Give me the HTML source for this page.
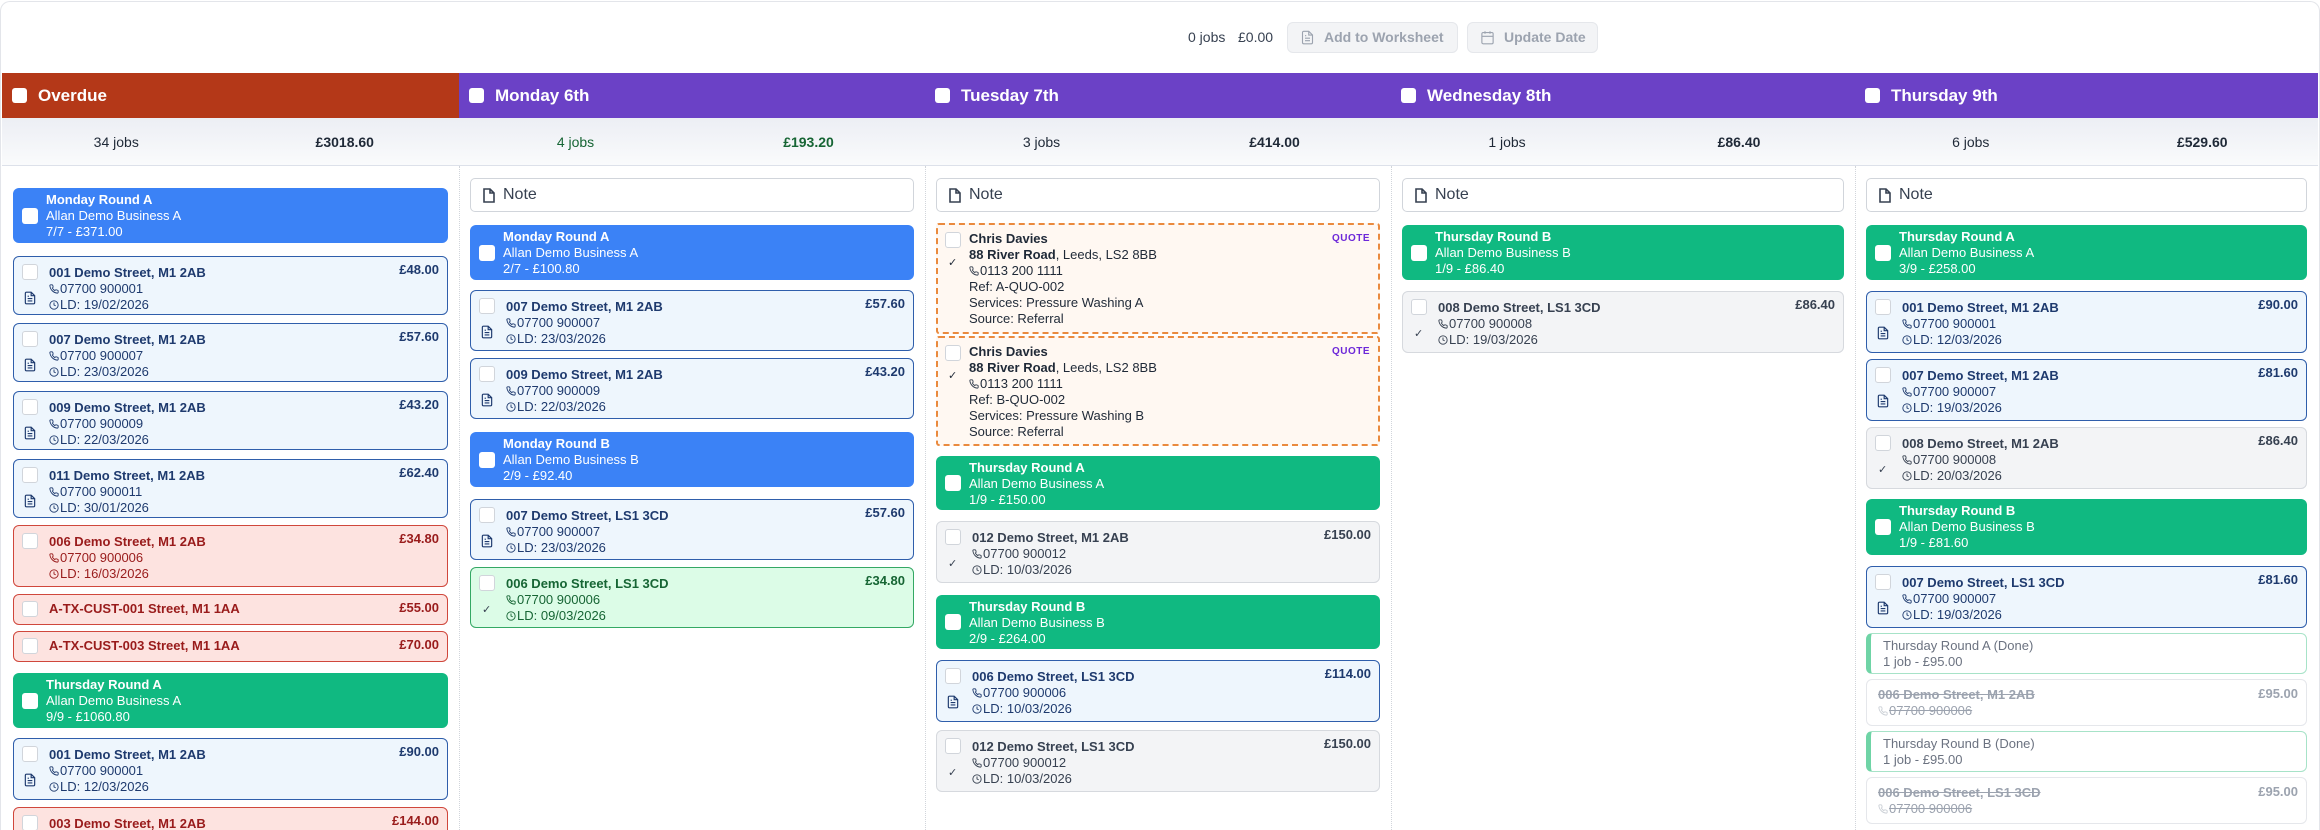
<!DOCTYPE html>
<html style="width:2320px;height:830px;overflow:hidden"><head><meta charset="utf-8"><style>
*{box-sizing:border-box;margin:0;padding:0}
body{width:2320px;height:830px;overflow:hidden;background:#fff;font-family:"Liberation Sans",Arial,sans-serif;position:relative;color:#1f2937}
.frame{position:absolute;left:0;top:1px;width:2320px;height:829px;border:1.5px solid #e3e5ea;border-bottom:none;border-radius:10px 10px 0 0}
.top{position:absolute;top:22px;height:31px;font-size:14px;line-height:31px;color:#374151}
.btn{position:absolute;top:22px;height:31px;background:#f3f4f6;border:1px solid #e5e7eb;border-radius:6px;color:#9ca3af;font-size:14px;font-weight:bold;line-height:29px;padding-left:36px}
.btn svg{position:absolute;left:12px;top:7px;width:15px;height:15px;fill:none;stroke:#9ca3af;stroke-width:1.8}
.col{position:absolute;top:0;height:830px;overflow:hidden}
.hd{position:absolute;top:73px;left:0;right:0;height:45px;color:#fff;font-weight:bold;font-size:17px;line-height:45px;padding-left:36px}
.hd i{position:absolute;left:10px;top:15px;width:15px;height:15px;background:#fff;border-radius:3px}
.sm{position:absolute;top:118px;left:0;right:0;height:48px;background:linear-gradient(#eceef4,#fafbfc);border-bottom:1.5px solid #dde1ea;font-size:14px;line-height:48px;color:#1f2937}
.sm span{position:absolute;width:50%;text-align:center}
.sm .a{left:0}.sm .b{left:50%;font-weight:bold}
.sep{position:absolute;top:166px;bottom:0;left:0;border-left:1px dotted #d1d5db}
.c{position:absolute;left:11px;right:11px;border-radius:6px;font-size:13px;line-height:16px}
.rd{color:#fff;padding:4px 0 0 33px}
.rd b{font-weight:bold}
.rd i{position:absolute;left:9px;top:50%;margin-top:-8px;width:16px;height:16px;background:#fff;border-radius:3px}
.bl{background:#3b82f6}.gr{background:#10b981}
.jb{padding:8px 0 0 35px;border:1.5px solid}
.jb .cb{position:absolute;left:8px;top:7px;width:16px;height:16px;background:#fff;border:1px solid #d1d5db;border-radius:3px}
.jb .p{position:absolute;right:8px;top:5px;font-weight:bold}
.jb b{font-weight:bold}
.jb .doc{position:absolute;left:9px;top:33px;width:14px;height:16px;fill:none;stroke-width:2}
.jb .ck{position:absolute;left:11px;top:34px;font-size:11px;color:#374151}
.ic{width:10px;height:10px;fill:none;stroke-width:2.2;vertical-align:-1px;margin-right:1px}
.blu{background:#eef6fd;border-color:#2f5eab;color:#1e3a6e}.blu svg{stroke:#1e3a6e}
.gry{background:#f3f4f6;border-color:#d6d9de;color:#374151}.gry svg{stroke:#374151}
.red{background:#fde3e0;border-color:#d0473c;color:#991b1b}.red svg{stroke:#991b1b}
.grn{background:#dcfce7;border-color:#34a864;color:#166534}.grn svg{stroke:#166534}
.note{position:absolute;left:11px;right:11px;top:178px;height:34px;border:1px solid #d1d5db;border-radius:5px;background:#fff;font-size:16px;line-height:32px;padding-left:32px;color:#374151}
.note svg{position:absolute;left:12px;top:9px;width:12px;height:15px;fill:none;stroke:#374151;stroke-width:1.6}
.q{background:#fff8f2;border:2px dashed #ea8a3e;border-radius:3px;padding:6px 0 0 31px;color:#1f2937}
.q .cb{position:absolute;left:7px;top:7px;width:16px;height:16px;background:#fff;border:1px solid #d1d5db;border-radius:3px}
.q .ck{position:absolute;left:10px;top:30px;font-size:11px}
.q .qt{position:absolute;right:8px;top:6px;font-size:10px;font-weight:bold;color:#6d28d9;letter-spacing:.5px}
.q svg{stroke:#374151}
.dn{background:#fff;border:1.5px solid #a7e3c8;border-left:5px solid #6fd4a6;color:#6b7280;padding:4px 0 0 12px;font-size:13px}
.st{background:#fff;border:1px solid #e5e7eb;color:#9ca3af;padding:7px 0 0 11px;text-decoration:line-through}
.st .p{position:absolute;right:8px;top:6px;font-weight:bold}
.st svg{stroke:#cbd0d6}
</style></head><body>
<div class="frame"></div>
<div class="top" style="left:1188px">0 jobs</div>
<div class="top" style="left:1238px">£0.00</div>
<div class="btn" style="left:1287px;width:171px"><svg viewBox="0 0 24 24"><path d="M14 2H6a2 2 0 0 0-2 2v16a2 2 0 0 0 2 2h12a2 2 0 0 0 2-2V8z"/><path d="M14 2v6h6M8 13h8M8 17h8M8 9h2"/></svg>Add to Worksheet</div>
<div class="btn" style="left:1467px;width:131px"><svg viewBox="0 0 24 24"><rect x="3" y="4" width="18" height="18" rx="2"/><path d="M16 2v4M8 2v4M3 10h18"/></svg>Update Date</div>

<!-- Overdue -->
<div class="col" style="left:2px;width:457px">
<div class="hd" style="background:#b43818"><i></i>Overdue</div>
<div class="sm"><span class="a">34 jobs</span><span class="b">£3018.60</span></div>
<div class="c rd bl" style="top:188px;height:55px"><i></i><b>Monday Round A</b><br>Allan Demo Business A<br>7/7 - £371.00</div>
<div class="c jb blu" style="top:256px;height:59px"><i class="cb"></i><svg class="doc" viewBox="0 0 24 24"><path d="M14 2H6a2 2 0 0 0-2 2v16a2 2 0 0 0 2 2h12a2 2 0 0 0 2-2V8z M14 2v6h6M8 13h8M8 17h8M8 9h2"/></svg><b>001 Demo Street, M1 2AB</b><br><svg class="ic" viewBox="0 0 24 24"><path d="M22 16.9v3a2 2 0 0 1-2.2 2A19.8 19.8 0 0 1 2.1 4.2 2 2 0 0 1 4.1 2h3a2 2 0 0 1 2 1.7l.7 2.7a2 2 0 0 1-.5 2.1L8 9.8a16 16 0 0 0 6 6l1.3-1.3a2 2 0 0 1 2.1-.4l2.7.7a2 2 0 0 1 1.9 2.1z"/></svg>07700 900001<br><svg class="ic" viewBox="0 0 24 24"><circle cx="12" cy="12" r="10"/><path d="M12 6v6l4 2"/></svg>LD: 19/02/2026<span class="p">£48.00</span></div>
<div class="c jb blu" style="top:323px;height:59px"><i class="cb"></i><svg class="doc" viewBox="0 0 24 24"><path d="M14 2H6a2 2 0 0 0-2 2v16a2 2 0 0 0 2 2h12a2 2 0 0 0 2-2V8z M14 2v6h6M8 13h8M8 17h8M8 9h2"/></svg><b>007 Demo Street, M1 2AB</b><br><svg class="ic" viewBox="0 0 24 24"><path d="M22 16.9v3a2 2 0 0 1-2.2 2A19.8 19.8 0 0 1 2.1 4.2 2 2 0 0 1 4.1 2h3a2 2 0 0 1 2 1.7l.7 2.7a2 2 0 0 1-.5 2.1L8 9.8a16 16 0 0 0 6 6l1.3-1.3a2 2 0 0 1 2.1-.4l2.7.7a2 2 0 0 1 1.9 2.1z"/></svg>07700 900007<br><svg class="ic" viewBox="0 0 24 24"><circle cx="12" cy="12" r="10"/><path d="M12 6v6l4 2"/></svg>LD: 23/03/2026<span class="p">£57.60</span></div>
<div class="c jb blu" style="top:391px;height:59px"><i class="cb"></i><svg class="doc" viewBox="0 0 24 24"><path d="M14 2H6a2 2 0 0 0-2 2v16a2 2 0 0 0 2 2h12a2 2 0 0 0 2-2V8z M14 2v6h6M8 13h8M8 17h8M8 9h2"/></svg><b>009 Demo Street, M1 2AB</b><br><svg class="ic" viewBox="0 0 24 24"><path d="M22 16.9v3a2 2 0 0 1-2.2 2A19.8 19.8 0 0 1 2.1 4.2 2 2 0 0 1 4.1 2h3a2 2 0 0 1 2 1.7l.7 2.7a2 2 0 0 1-.5 2.1L8 9.8a16 16 0 0 0 6 6l1.3-1.3a2 2 0 0 1 2.1-.4l2.7.7a2 2 0 0 1 1.9 2.1z"/></svg>07700 900009<br><svg class="ic" viewBox="0 0 24 24"><circle cx="12" cy="12" r="10"/><path d="M12 6v6l4 2"/></svg>LD: 22/03/2026<span class="p">£43.20</span></div>
<div class="c jb blu" style="top:459px;height:59px"><i class="cb"></i><svg class="doc" viewBox="0 0 24 24"><path d="M14 2H6a2 2 0 0 0-2 2v16a2 2 0 0 0 2 2h12a2 2 0 0 0 2-2V8z M14 2v6h6M8 13h8M8 17h8M8 9h2"/></svg><b>011 Demo Street, M1 2AB</b><br><svg class="ic" viewBox="0 0 24 24"><path d="M22 16.9v3a2 2 0 0 1-2.2 2A19.8 19.8 0 0 1 2.1 4.2 2 2 0 0 1 4.1 2h3a2 2 0 0 1 2 1.7l.7 2.7a2 2 0 0 1-.5 2.1L8 9.8a16 16 0 0 0 6 6l1.3-1.3a2 2 0 0 1 2.1-.4l2.7.7a2 2 0 0 1 1.9 2.1z"/></svg>07700 900011<br><svg class="ic" viewBox="0 0 24 24"><circle cx="12" cy="12" r="10"/><path d="M12 6v6l4 2"/></svg>LD: 30/01/2026<span class="p">£62.40</span></div>
<div class="c jb red" style="top:525px;height:62px"><i class="cb"></i><b>006 Demo Street, M1 2AB</b><br><svg class="ic" viewBox="0 0 24 24"><path d="M22 16.9v3a2 2 0 0 1-2.2 2A19.8 19.8 0 0 1 2.1 4.2 2 2 0 0 1 4.1 2h3a2 2 0 0 1 2 1.7l.7 2.7a2 2 0 0 1-.5 2.1L8 9.8a16 16 0 0 0 6 6l1.3-1.3a2 2 0 0 1 2.1-.4l2.7.7a2 2 0 0 1 1.9 2.1z"/></svg>07700 900006<br><svg class="ic" viewBox="0 0 24 24"><circle cx="12" cy="12" r="10"/><path d="M12 6v6l4 2"/></svg>LD: 16/03/2026<span class="p">£34.80</span></div>
<div class="c jb red" style="top:594px;height:31px;padding-top:6px"><i class="cb" style="top:6px"></i><b>A-TX-CUST-001 Street, M1 1AA</b><span class="p">£55.00</span></div>
<div class="c jb red" style="top:631px;height:31px;padding-top:6px"><i class="cb" style="top:6px"></i><b>A-TX-CUST-003 Street, M1 1AA</b><span class="p">£70.00</span></div>
<div class="c rd gr" style="top:673px;height:55px"><i></i><b>Thursday Round A</b><br>Allan Demo Business A<br>9/9 - £1060.80</div>
<div class="c jb blu" style="top:738px;height:62px"><i class="cb"></i><svg class="doc" viewBox="0 0 24 24"><path d="M14 2H6a2 2 0 0 0-2 2v16a2 2 0 0 0 2 2h12a2 2 0 0 0 2-2V8z M14 2v6h6M8 13h8M8 17h8M8 9h2"/></svg><b>001 Demo Street, M1 2AB</b><br><svg class="ic" viewBox="0 0 24 24"><path d="M22 16.9v3a2 2 0 0 1-2.2 2A19.8 19.8 0 0 1 2.1 4.2 2 2 0 0 1 4.1 2h3a2 2 0 0 1 2 1.7l.7 2.7a2 2 0 0 1-.5 2.1L8 9.8a16 16 0 0 0 6 6l1.3-1.3a2 2 0 0 1 2.1-.4l2.7.7a2 2 0 0 1 1.9 2.1z"/></svg>07700 900001<br><svg class="ic" viewBox="0 0 24 24"><circle cx="12" cy="12" r="10"/><path d="M12 6v6l4 2"/></svg>LD: 12/03/2026<span class="p">£90.00</span></div>
<div class="c jb red" style="top:807px;height:40px"><i class="cb"></i><b>003 Demo Street, M1 2AB</b><span class="p">£144.00</span></div>
</div>

<!-- Monday -->
<div class="col" style="left:459px;width:466px">
<div class="hd" style="background:#6b41c6"><i></i>Monday 6th</div>
<div class="sm" style="color:#166534"><span class="a">4 jobs</span><span class="b">£193.20</span></div>
<div class="sep"></div>
<div class="note"><svg viewBox="0 0 12 15"><path d="M1 1h6l4 4v9H1z M7 1v4h4"/></svg>Note</div>
<div class="c rd bl" style="top:225px;height:55px"><i></i><b>Monday Round A</b><br>Allan Demo Business A<br>2/7 - £100.80</div>
<div class="c jb blu" style="top:290px;height:61px"><i class="cb"></i><svg class="doc" viewBox="0 0 24 24"><path d="M14 2H6a2 2 0 0 0-2 2v16a2 2 0 0 0 2 2h12a2 2 0 0 0 2-2V8z M14 2v6h6M8 13h8M8 17h8M8 9h2"/></svg><b>007 Demo Street, M1 2AB</b><br><svg class="ic" viewBox="0 0 24 24"><path d="M22 16.9v3a2 2 0 0 1-2.2 2A19.8 19.8 0 0 1 2.1 4.2 2 2 0 0 1 4.1 2h3a2 2 0 0 1 2 1.7l.7 2.7a2 2 0 0 1-.5 2.1L8 9.8a16 16 0 0 0 6 6l1.3-1.3a2 2 0 0 1 2.1-.4l2.7.7a2 2 0 0 1 1.9 2.1z"/></svg>07700 900007<br><svg class="ic" viewBox="0 0 24 24"><circle cx="12" cy="12" r="10"/><path d="M12 6v6l4 2"/></svg>LD: 23/03/2026<span class="p">£57.60</span></div>
<div class="c jb blu" style="top:358px;height:61px"><i class="cb"></i><svg class="doc" viewBox="0 0 24 24"><path d="M14 2H6a2 2 0 0 0-2 2v16a2 2 0 0 0 2 2h12a2 2 0 0 0 2-2V8z M14 2v6h6M8 13h8M8 17h8M8 9h2"/></svg><b>009 Demo Street, M1 2AB</b><br><svg class="ic" viewBox="0 0 24 24"><path d="M22 16.9v3a2 2 0 0 1-2.2 2A19.8 19.8 0 0 1 2.1 4.2 2 2 0 0 1 4.1 2h3a2 2 0 0 1 2 1.7l.7 2.7a2 2 0 0 1-.5 2.1L8 9.8a16 16 0 0 0 6 6l1.3-1.3a2 2 0 0 1 2.1-.4l2.7.7a2 2 0 0 1 1.9 2.1z"/></svg>07700 900009<br><svg class="ic" viewBox="0 0 24 24"><circle cx="12" cy="12" r="10"/><path d="M12 6v6l4 2"/></svg>LD: 22/03/2026<span class="p">£43.20</span></div>
<div class="c rd bl" style="top:432px;height:55px"><i></i><b>Monday Round B</b><br>Allan Demo Business B<br>2/9 - £92.40</div>
<div class="c jb blu" style="top:499px;height:61px"><i class="cb"></i><svg class="doc" viewBox="0 0 24 24"><path d="M14 2H6a2 2 0 0 0-2 2v16a2 2 0 0 0 2 2h12a2 2 0 0 0 2-2V8z M14 2v6h6M8 13h8M8 17h8M8 9h2"/></svg><b>007 Demo Street, LS1 3CD</b><br><svg class="ic" viewBox="0 0 24 24"><path d="M22 16.9v3a2 2 0 0 1-2.2 2A19.8 19.8 0 0 1 2.1 4.2 2 2 0 0 1 4.1 2h3a2 2 0 0 1 2 1.7l.7 2.7a2 2 0 0 1-.5 2.1L8 9.8a16 16 0 0 0 6 6l1.3-1.3a2 2 0 0 1 2.1-.4l2.7.7a2 2 0 0 1 1.9 2.1z"/></svg>07700 900007<br><svg class="ic" viewBox="0 0 24 24"><circle cx="12" cy="12" r="10"/><path d="M12 6v6l4 2"/></svg>LD: 23/03/2026<span class="p">£57.60</span></div>
<div class="c jb grn" style="top:567px;height:61px"><i class="cb"></i><span class="ck">✓</span><b>006 Demo Street, LS1 3CD</b><br><svg class="ic" viewBox="0 0 24 24"><path d="M22 16.9v3a2 2 0 0 1-2.2 2A19.8 19.8 0 0 1 2.1 4.2 2 2 0 0 1 4.1 2h3a2 2 0 0 1 2 1.7l.7 2.7a2 2 0 0 1-.5 2.1L8 9.8a16 16 0 0 0 6 6l1.3-1.3a2 2 0 0 1 2.1-.4l2.7.7a2 2 0 0 1 1.9 2.1z"/></svg>07700 900006<br><svg class="ic" viewBox="0 0 24 24"><circle cx="12" cy="12" r="10"/><path d="M12 6v6l4 2"/></svg>LD: 09/03/2026<span class="p">£34.80</span></div>
</div>

<!-- Tuesday -->
<div class="col" style="left:925px;width:466px">
<div class="hd" style="background:#6b41c6"><i></i>Tuesday 7th</div>
<div class="sm"><span class="a">3 jobs</span><span class="b">£414.00</span></div>
<div class="sep"></div>
<div class="note"><svg viewBox="0 0 12 15"><path d="M1 1h6l4 4v9H1z M7 1v4h4"/></svg>Note</div>
<div class="c q" style="top:223px;height:111px"><i class="cb"></i><span class="ck">✓</span><span class="qt">QUOTE</span><b>Chris Davies</b><br><b>88 River Road</b>, Leeds, LS2 8BB<br><svg class="ic" viewBox="0 0 24 24"><path d="M22 16.9v3a2 2 0 0 1-2.2 2A19.8 19.8 0 0 1 2.1 4.2 2 2 0 0 1 4.1 2h3a2 2 0 0 1 2 1.7l.7 2.7a2 2 0 0 1-.5 2.1L8 9.8a16 16 0 0 0 6 6l1.3-1.3a2 2 0 0 1 2.1-.4l2.7.7a2 2 0 0 1 1.9 2.1z"/></svg>0113 200 1111<br>Ref: A-QUO-002<br>Services: Pressure Washing A<br>Source: Referral</div>
<div class="c q" style="top:336px;height:110px"><i class="cb"></i><span class="ck">✓</span><span class="qt">QUOTE</span><b>Chris Davies</b><br><b>88 River Road</b>, Leeds, LS2 8BB<br><svg class="ic" viewBox="0 0 24 24"><path d="M22 16.9v3a2 2 0 0 1-2.2 2A19.8 19.8 0 0 1 2.1 4.2 2 2 0 0 1 4.1 2h3a2 2 0 0 1 2 1.7l.7 2.7a2 2 0 0 1-.5 2.1L8 9.8a16 16 0 0 0 6 6l1.3-1.3a2 2 0 0 1 2.1-.4l2.7.7a2 2 0 0 1 1.9 2.1z"/></svg>0113 200 1111<br>Ref: B-QUO-002<br>Services: Pressure Washing B<br>Source: Referral</div>
<div class="c rd gr" style="top:456px;height:54px"><i></i><b>Thursday Round A</b><br>Allan Demo Business A<br>1/9 - £150.00</div>
<div class="c jb gry" style="top:521px;height:62px"><i class="cb"></i><span class="ck">✓</span><b>012 Demo Street, M1 2AB</b><br><svg class="ic" viewBox="0 0 24 24"><path d="M22 16.9v3a2 2 0 0 1-2.2 2A19.8 19.8 0 0 1 2.1 4.2 2 2 0 0 1 4.1 2h3a2 2 0 0 1 2 1.7l.7 2.7a2 2 0 0 1-.5 2.1L8 9.8a16 16 0 0 0 6 6l1.3-1.3a2 2 0 0 1 2.1-.4l2.7.7a2 2 0 0 1 1.9 2.1z"/></svg>07700 900012<br><svg class="ic" viewBox="0 0 24 24"><circle cx="12" cy="12" r="10"/><path d="M12 6v6l4 2"/></svg>LD: 10/03/2026<span class="p">£150.00</span></div>
<div class="c rd gr" style="top:595px;height:54px"><i></i><b>Thursday Round B</b><br>Allan Demo Business B<br>2/9 - £264.00</div>
<div class="c jb blu" style="top:660px;height:62px"><i class="cb"></i><svg class="doc" viewBox="0 0 24 24"><path d="M14 2H6a2 2 0 0 0-2 2v16a2 2 0 0 0 2 2h12a2 2 0 0 0 2-2V8z M14 2v6h6M8 13h8M8 17h8M8 9h2"/></svg><b>006 Demo Street, LS1 3CD</b><br><svg class="ic" viewBox="0 0 24 24"><path d="M22 16.9v3a2 2 0 0 1-2.2 2A19.8 19.8 0 0 1 2.1 4.2 2 2 0 0 1 4.1 2h3a2 2 0 0 1 2 1.7l.7 2.7a2 2 0 0 1-.5 2.1L8 9.8a16 16 0 0 0 6 6l1.3-1.3a2 2 0 0 1 2.1-.4l2.7.7a2 2 0 0 1 1.9 2.1z"/></svg>07700 900006<br><svg class="ic" viewBox="0 0 24 24"><circle cx="12" cy="12" r="10"/><path d="M12 6v6l4 2"/></svg>LD: 10/03/2026<span class="p">£114.00</span></div>
<div class="c jb gry" style="top:730px;height:62px"><i class="cb"></i><span class="ck">✓</span><b>012 Demo Street, LS1 3CD</b><br><svg class="ic" viewBox="0 0 24 24"><path d="M22 16.9v3a2 2 0 0 1-2.2 2A19.8 19.8 0 0 1 2.1 4.2 2 2 0 0 1 4.1 2h3a2 2 0 0 1 2 1.7l.7 2.7a2 2 0 0 1-.5 2.1L8 9.8a16 16 0 0 0 6 6l1.3-1.3a2 2 0 0 1 2.1-.4l2.7.7a2 2 0 0 1 1.9 2.1z"/></svg>07700 900012<br><svg class="ic" viewBox="0 0 24 24"><circle cx="12" cy="12" r="10"/><path d="M12 6v6l4 2"/></svg>LD: 10/03/2026<span class="p">£150.00</span></div>
</div>

<!-- Wednesday -->
<div class="col" style="left:1391px;width:464px">
<div class="hd" style="background:#6b41c6"><i></i>Wednesday 8th</div>
<div class="sm"><span class="a">1 jobs</span><span class="b">£86.40</span></div>
<div class="sep"></div>
<div class="note"><svg viewBox="0 0 12 15"><path d="M1 1h6l4 4v9H1z M7 1v4h4"/></svg>Note</div>
<div class="c rd gr" style="top:225px;height:55px"><i></i><b>Thursday Round B</b><br>Allan Demo Business B<br>1/9 - £86.40</div>
<div class="c jb gry" style="top:291px;height:62px"><i class="cb"></i><span class="ck">✓</span><b>008 Demo Street, LS1 3CD</b><br><svg class="ic" viewBox="0 0 24 24"><path d="M22 16.9v3a2 2 0 0 1-2.2 2A19.8 19.8 0 0 1 2.1 4.2 2 2 0 0 1 4.1 2h3a2 2 0 0 1 2 1.7l.7 2.7a2 2 0 0 1-.5 2.1L8 9.8a16 16 0 0 0 6 6l1.3-1.3a2 2 0 0 1 2.1-.4l2.7.7a2 2 0 0 1 1.9 2.1z"/></svg>07700 900008<br><svg class="ic" viewBox="0 0 24 24"><circle cx="12" cy="12" r="10"/><path d="M12 6v6l4 2"/></svg>LD: 19/03/2026<span class="p">£86.40</span></div>
</div>

<!-- Thursday -->
<div class="col" style="left:1855px;width:463px">
<div class="hd" style="background:#6b41c6"><i></i>Thursday 9th</div>
<div class="sm"><span class="a">6 jobs</span><span class="b">£529.60</span></div>
<div class="sep"></div>
<div class="note"><svg viewBox="0 0 12 15"><path d="M1 1h6l4 4v9H1z M7 1v4h4"/></svg>Note</div>
<div class="c rd gr" style="top:225px;height:55px"><i></i><b>Thursday Round A</b><br>Allan Demo Business A<br>3/9 - £258.00</div>
<div class="c jb blu" style="top:291px;height:62px"><i class="cb"></i><svg class="doc" viewBox="0 0 24 24"><path d="M14 2H6a2 2 0 0 0-2 2v16a2 2 0 0 0 2 2h12a2 2 0 0 0 2-2V8z M14 2v6h6M8 13h8M8 17h8M8 9h2"/></svg><b>001 Demo Street, M1 2AB</b><br><svg class="ic" viewBox="0 0 24 24"><path d="M22 16.9v3a2 2 0 0 1-2.2 2A19.8 19.8 0 0 1 2.1 4.2 2 2 0 0 1 4.1 2h3a2 2 0 0 1 2 1.7l.7 2.7a2 2 0 0 1-.5 2.1L8 9.8a16 16 0 0 0 6 6l1.3-1.3a2 2 0 0 1 2.1-.4l2.7.7a2 2 0 0 1 1.9 2.1z"/></svg>07700 900001<br><svg class="ic" viewBox="0 0 24 24"><circle cx="12" cy="12" r="10"/><path d="M12 6v6l4 2"/></svg>LD: 12/03/2026<span class="p">£90.00</span></div>
<div class="c jb blu" style="top:359px;height:62px"><i class="cb"></i><svg class="doc" viewBox="0 0 24 24"><path d="M14 2H6a2 2 0 0 0-2 2v16a2 2 0 0 0 2 2h12a2 2 0 0 0 2-2V8z M14 2v6h6M8 13h8M8 17h8M8 9h2"/></svg><b>007 Demo Street, M1 2AB</b><br><svg class="ic" viewBox="0 0 24 24"><path d="M22 16.9v3a2 2 0 0 1-2.2 2A19.8 19.8 0 0 1 2.1 4.2 2 2 0 0 1 4.1 2h3a2 2 0 0 1 2 1.7l.7 2.7a2 2 0 0 1-.5 2.1L8 9.8a16 16 0 0 0 6 6l1.3-1.3a2 2 0 0 1 2.1-.4l2.7.7a2 2 0 0 1 1.9 2.1z"/></svg>07700 900007<br><svg class="ic" viewBox="0 0 24 24"><circle cx="12" cy="12" r="10"/><path d="M12 6v6l4 2"/></svg>LD: 19/03/2026<span class="p">£81.60</span></div>
<div class="c jb gry" style="top:427px;height:62px"><i class="cb"></i><span class="ck">✓</span><b>008 Demo Street, M1 2AB</b><br><svg class="ic" viewBox="0 0 24 24"><path d="M22 16.9v3a2 2 0 0 1-2.2 2A19.8 19.8 0 0 1 2.1 4.2 2 2 0 0 1 4.1 2h3a2 2 0 0 1 2 1.7l.7 2.7a2 2 0 0 1-.5 2.1L8 9.8a16 16 0 0 0 6 6l1.3-1.3a2 2 0 0 1 2.1-.4l2.7.7a2 2 0 0 1 1.9 2.1z"/></svg>07700 900008<br><svg class="ic" viewBox="0 0 24 24"><circle cx="12" cy="12" r="10"/><path d="M12 6v6l4 2"/></svg>LD: 20/03/2026<span class="p">£86.40</span></div>
<div class="c rd gr" style="top:499px;height:56px"><i></i><b>Thursday Round B</b><br>Allan Demo Business B<br>1/9 - £81.60</div>
<div class="c jb blu" style="top:566px;height:62px"><i class="cb"></i><svg class="doc" viewBox="0 0 24 24"><path d="M14 2H6a2 2 0 0 0-2 2v16a2 2 0 0 0 2 2h12a2 2 0 0 0 2-2V8z M14 2v6h6M8 13h8M8 17h8M8 9h2"/></svg><b>007 Demo Street, LS1 3CD</b><br><svg class="ic" viewBox="0 0 24 24"><path d="M22 16.9v3a2 2 0 0 1-2.2 2A19.8 19.8 0 0 1 2.1 4.2 2 2 0 0 1 4.1 2h3a2 2 0 0 1 2 1.7l.7 2.7a2 2 0 0 1-.5 2.1L8 9.8a16 16 0 0 0 6 6l1.3-1.3a2 2 0 0 1 2.1-.4l2.7.7a2 2 0 0 1 1.9 2.1z"/></svg>07700 900007<br><svg class="ic" viewBox="0 0 24 24"><circle cx="12" cy="12" r="10"/><path d="M12 6v6l4 2"/></svg>LD: 19/03/2026<span class="p">£81.60</span></div>
<div class="c dn" style="top:633px;height:41px">Thursday Round A (Done)<br>1 job - £95.00</div>
<div class="c st" style="top:679px;height:47px"><b>006 Demo Street, M1 2AB</b><br><svg class="ic" viewBox="0 0 24 24"><path d="M22 16.9v3a2 2 0 0 1-2.2 2A19.8 19.8 0 0 1 2.1 4.2 2 2 0 0 1 4.1 2h3a2 2 0 0 1 2 1.7l.7 2.7a2 2 0 0 1-.5 2.1L8 9.8a16 16 0 0 0 6 6l1.3-1.3a2 2 0 0 1 2.1-.4l2.7.7a2 2 0 0 1 1.9 2.1z"/></svg>07700 900006<span class="p">£95.00</span></div>
<div class="c dn" style="top:731px;height:41px">Thursday Round B (Done)<br>1 job - £95.00</div>
<div class="c st" style="top:777px;height:47px"><b>006 Demo Street, LS1 3CD</b><br><svg class="ic" viewBox="0 0 24 24"><path d="M22 16.9v3a2 2 0 0 1-2.2 2A19.8 19.8 0 0 1 2.1 4.2 2 2 0 0 1 4.1 2h3a2 2 0 0 1 2 1.7l.7 2.7a2 2 0 0 1-.5 2.1L8 9.8a16 16 0 0 0 6 6l1.3-1.3a2 2 0 0 1 2.1-.4l2.7.7a2 2 0 0 1 1.9 2.1z"/></svg>07700 900006<span class="p">£95.00</span></div>
</div>
</body></html>
